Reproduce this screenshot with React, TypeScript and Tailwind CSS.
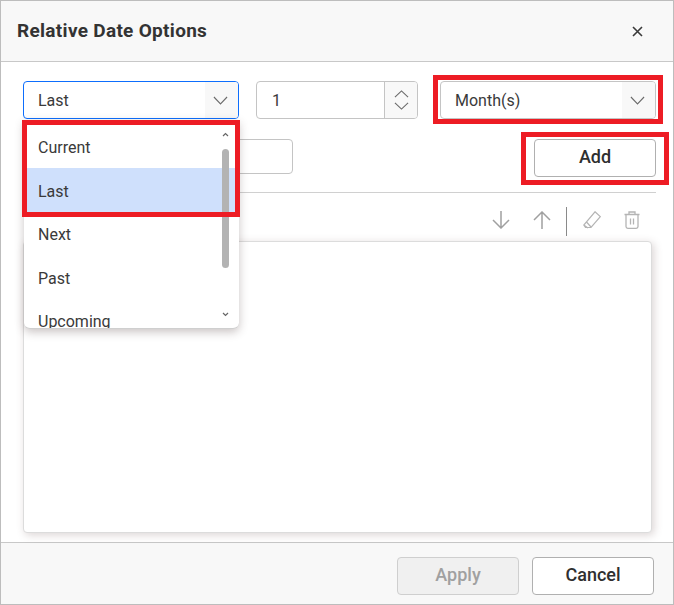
import React from "react";

const Chevron = ({ up = false, small = false }: { up?: boolean; small?: boolean }) => (
  <svg
    viewBox="0 0 16 9"
    preserveAspectRatio="none"
    fill="none"
    stroke="#6b6b6b"
    strokeWidth="1.2"
    className={small ? "h-[8px] w-[15px]" : "h-[9px] w-[15px]"}
  >
    <path d={up ? "M1 8 L8 1 L15 8" : "M1 1 L8 8 L15 1"} />
  </svg>
);

const SelectBox = ({ text, focus = false }: { text: string; focus?: boolean }) => (
  <div
    className={`flex h-[38px] w-[216px] shrink-0 items-center overflow-hidden rounded-[4px] border bg-white ${
      focus ? "border-[#0d6efd]" : "border-[#c4c4c4]"
    }`}
  >
    <span className="flex-1 pl-[14px] pt-[2px] text-[16px] text-[#3a3a3a]">{text}</span>
    <span className="flex h-full w-[33px] items-center justify-center bg-[#f8f8f8] pr-[3px]">
      <Chevron />
    </span>
  </div>
);

const Item = ({ text, active = false }: { text: string; active?: boolean }) => (
  <div
    className={`flex shrink-0 items-center pl-[14px] text-[16px] text-[#3a3a3a] ${
      active ? "-mt-[2.5px] h-[46px] bg-[#cfe0fc] pt-[3.5px]" : "h-[43.5px] first:h-[44px]"
    }`}
  >
    {text}
  </div>
);

const RedBox = ({ className }: { className: string }) => (
  <div className={`pointer-events-none absolute z-20 border-[5px] border-[#ed1c24] ${className}`} />
);

export default function App() {
  return (
    <div className="relative flex h-[605px] w-[674px] flex-col overflow-hidden border border-[#bdbdbd] bg-white font-['Roboto',sans-serif]">
      <header className="flex h-[61px] shrink-0 items-center justify-between border-b border-[#c8c8c8] bg-[#f8f8f8] pl-[16px] pr-[30px]">
        <h1 className="text-[19px] font-bold tracking-[0.3px] text-[#333333]">Relative Date Options</h1>
        <svg width="11" height="11" viewBox="0 0 11 11" stroke="#3a3a3a" strokeWidth="1.6">
          <path d="M1 1 L10 10 M10 1 L1 10" />
        </svg>
      </header>

      <main className="relative flex flex-1 flex-col pl-[22px] pr-[17px] pt-[19px]">
        <div className="flex items-center">
          <SelectBox text="Last" focus />
          <div className="ml-[17px] flex h-[38px] w-[162px] shrink-0 items-center overflow-hidden rounded-[4px] border border-[#c4c4c4] bg-white">
            <span className="flex-1 pl-[15px] pt-[2px] text-[16px] text-[#3a3a3a]">1</span>
            <span className="flex h-full w-[33px] flex-col items-center justify-center gap-[4px] border-l border-[#c4c4c4] bg-[#f8f8f8]">
              <Chevron up small />
              <Chevron small />
            </span>
          </div>
          <div className="ml-[22px] shrink-0">
            <SelectBox text="Month(s)" />
          </div>
        </div>

        <div className="mt-[20px] flex items-start justify-between">
          <div className="h-[35px] w-[270px] rounded-[4px] border border-[#c4c4c4] bg-white" />
          <button className="h-[38px] w-[122px] rounded-[4px] border border-[#b0b0b0] bg-white pb-[4px] text-[18px] font-medium text-[#2f2f2f]">
            Add
          </button>
        </div>

        <div className="mt-[15px] h-px w-[633px] bg-[#d0d0d0]" />

        <div className="mt-[14px] flex h-[29px] w-[621px] items-start justify-end pr-[4px]">
          <svg width="18" height="18" viewBox="0 0 18 18" fill="none" stroke="#a0a0a0" strokeWidth="1.5" className="mt-[4px]">
            <path d="M9 0 V17 M1 9 L9 17 L17 9" />
          </svg>
          <svg width="18" height="18" viewBox="0 0 18 18" fill="none" stroke="#a0a0a0" strokeWidth="1.5" className="ml-[23px] mt-[4px]">
            <path d="M9 18 V1 M1 9 L9 1 L17 9" />
          </svg>
          <div className="ml-[15px] h-[29px] w-px bg-[#8a8a8a]" />
          <svg width="18" height="18" viewBox="0 0 18 18" fill="none" stroke="#b4b4b4" strokeWidth="1.2" className="ml-[16px] mt-[4px]">
            <path d="M12 0.8 L17.3 5.6 L8 16.5 H2.5 L0.8 14 Z M0.8 14 L5 17 M3.5 11 L8 16" />
          </svg>
          <svg width="16" height="18" viewBox="0 0 16 18" fill="none" stroke="#b4b4b4" strokeWidth="1.3" className="ml-[23px] mt-[4px]">
            <path d="M0.5 3.5 H15.5 M5 3.5 V1 H11 V3.5 M2 4 V15.5 Q2 17.3 3.8 17.3 H12.2 Q14 17.3 14 15.5 V4 M6.5 7.5 V13.5 M9.5 7.5 V13.5" />
          </svg>
        </div>

        <div className="mt-[5px] h-[292px] w-[629px] rounded-[4px] border border-[#dcdcdc] bg-white shadow-[2px_2px_8px_rgba(90,60,60,0.22)]" />

        <div className="absolute left-[23px] top-[58px] z-10 flex h-[209px] w-[215px] flex-col overflow-hidden rounded-b-[6px] border-b border-[#cfcfcf] bg-white pt-[6px] shadow-[0_3px_10px_rgba(60,40,40,0.28)]">
          <Item text="Current" />
          <Item text="Last" active />
          <Item text="Next" />
          <Item text="Past" />
          <Item text="Upcoming" />
          <div className="absolute right-[5px] top-0 flex h-full w-[17px] flex-col items-center">
            <svg width="7" height="5" viewBox="0 0 7 5" fill="none" stroke="#666666" strokeWidth="1.2" className="mt-[12px]">
              <path d="M1 4 L3.5 1.5 L6 4" />
            </svg>
            <div className="mt-[12px] h-[119px] w-[7px] shrink-0 rounded-[4px] bg-[#b3b3b3]" />
            <svg width="7" height="5" viewBox="0 0 7 5" fill="none" stroke="#666666" strokeWidth="1.2" className="mt-[44px]">
              <path d="M1 1 L3.5 3.5 L6 1" />
            </svg>
          </div>
        </div>
      </main>

      <footer className="flex h-[62px] shrink-0 items-start justify-end gap-[13px] border-t border-[#c8c8c8] bg-[#f8f8f8] pr-[19px] pt-[14px]">
        <button className="h-[38px] w-[122px] rounded-[4px] border border-[#cfcfcf] bg-[#f0f0f0] pb-[4px] text-[18px] font-medium text-[#a0a0a0]">
          Apply
        </button>
        <button className="h-[38px] w-[122px] rounded-[4px] border border-[#b0b0b0] bg-white pb-[4px] text-[18px] font-medium text-[#2f2f2f]">
          Cancel
        </button>
      </footer>

      <RedBox className="left-[21px] top-[119px] h-[97px] w-[218px]" />
      <RedBox className="left-[432px] top-[74px] h-[49px] w-[230px]" />
      <RedBox className="left-[520px] top-[131px] h-[53px] w-[148px]" />
    </div>
  );
}
